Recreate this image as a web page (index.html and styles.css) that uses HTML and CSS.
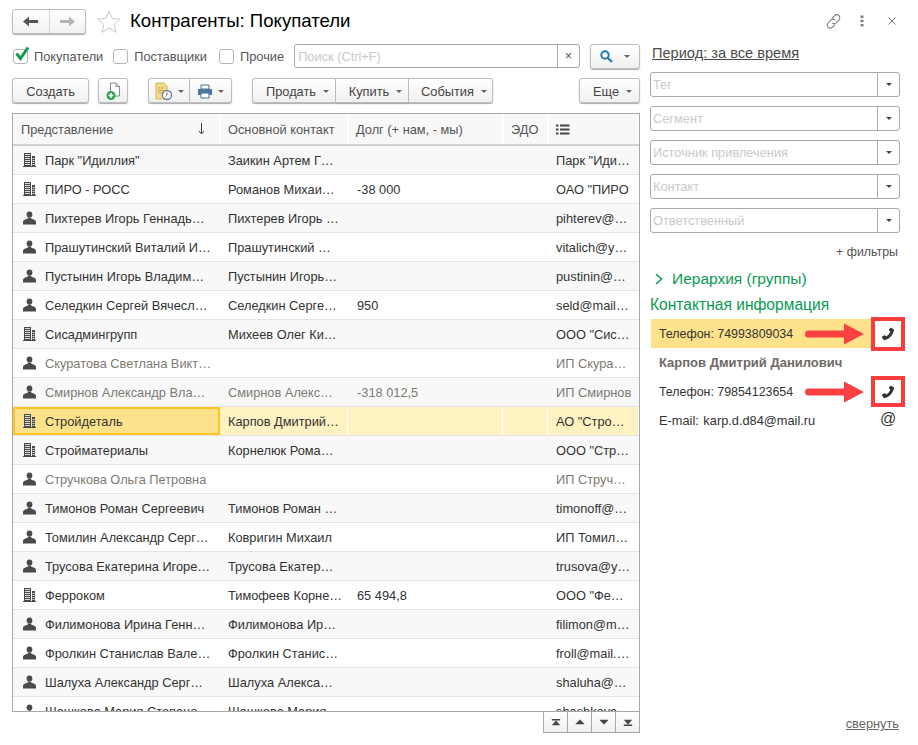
FILE: index.html
```html
<!DOCTYPE html>
<html lang="ru">
<head>
    <meta charset="utf-8" />
    <title>Контрагенты: Покупатели</title>
    <link rel="stylesheet" href="styles.css">
</head>
<body>
    <svg class="defs" width="0" height="0">
        <symbol id="i-org" viewBox="0 0 13 14">
            <path d="M1 0h7v13H1zM9 3h3v10H9z" fill="#4a4a4a" />
            <path d="M2 1.500h5M2 3.500h5M2 5.500h5M2 7.500h5M2 9.500h5M2 11.500h5M9.500 5.500h2M9.500 7.500h2M9.500 9.500h2M9.500 11.500h2" stroke="#fff" stroke-width="1" fill="none" opacity=".8" />
            <path d="M0 13.500h13" stroke="#4a4a4a" stroke-width="1" />
        </symbol>
        <symbol id="i-man" viewBox="0 0 13 13">
            <ellipse cx="6.500" cy="3" rx="2.900" ry="3" fill="#4a4a4a" />
            <path d="M4.800 6h3.400l.3 1.400c2.300.4 4.500 1.100 4.500 3V13H0v-2.600c0-1.900 2.200-2.600 4.500-3z" fill="#4a4a4a" />
        </symbol>
        <symbol id="i-phone" viewBox="0 0 14 14">
            <path d="M10.200 .8l2.600 1.800c.3.200.3.5.2.900-.8 2.900-2.300 5.300-4.300 7.100-1.700 1.500-3.600 2.400-5.300 2.600-.4 0-.6-.1-.8-.4L1 10.500c-.2-.4-.1-.7.200-.9l2.200-1.300c.3-.2.600-.1.800.1l1 1.100c1.900-1 3.400-2.800 4.200-5L8.100 3.400c-.3-.2-.3-.5-.2-.8L9.400 1c.2-.3.500-.4.800-.2z" fill="#333" />
        </symbol>
        <symbol id="i-arrow" viewBox="0 0 59 24">
            <path d="M3.500 8.500H39V1.500L59 12 39 22.500V15.500H3.500a3.500 3.500 0 0 1 0-7z" fill="#f94141" />
        </symbol>
    </svg>

    <div class="page">
        <header class="head">
            <div class="navbtns">
                <span class="navbtn">
                    <svg width="15" height="11" viewBox="0 0 15 11"><path d="M0 5.500L6 .5v3.500h9v3H6v3.500z" fill="#555" /></svg>
                </span>
                <span class="navbtn">
                    <svg width="15" height="11" viewBox="0 0 15 11"><path d="M15 5.500L9 .5v3.500H0v3h9v3.500z" fill="#b5b5b5" /></svg>
                </span>
            </div>
            <svg class="star" width="24" height="23" viewBox="0 0 24 23"><path d="M12 1l3.200 7.400 8 .7-6.100 5.300 1.900 7.900L12 18.100l-7 4.200 1.900-7.900L.8 9.100l8-.7z" fill="#fff" stroke="#c9c9c9" /></svg>
            <h1 class="title">Контрагенты: Покупатели</h1>
            <div class="wintools">
                <svg class="tool-link" width="17" height="17" viewBox="0 0 18 18"><path d="M7.500 5.500l2.500-2.500a3.200 3.200 0 0 1 4.800 4.400l-2.800 2.900a3.200 3.200 0 0 1-4.500.2M10.500 12.500l-2.500 2.500a3.200 3.200 0 0 1-4.800-4.400l2.800-2.900a3.200 3.200 0 0 1 4.500-.2" fill="none" stroke="#777" stroke-width="1.100" /></svg>
                <svg class="tool-dots" width="4" height="12" viewBox="0 0 4 12"><path d="M.5.500h3v2.500h-3zM.5 4.800h3v2.500h-3zM.5 9h3v2.500h-3z" fill="#808080" /></svg>
                <svg class="tool-close" width="8" height="8" viewBox="0 0 8 8"><path d="M.5.500l7 7M7.500.500l-7 7" stroke="#777" stroke-width="1" /></svg>
            </div>
        </header>

        <div class="content">
            <main class="main">
                <div class="filterbar">
                    <label class="check"><span class="box">
                        <svg class="tick" width="16" height="15" viewBox="0 0 16 15"><path d="M2.500 7.500l4 5L14 1.500" fill="none" stroke="#0e9a4e" stroke-width="3" /></svg>
                    </span>Покупатели</label>
                    <label class="check"><span class="box"></span>Поставщики</label>
                    <label class="check"><span class="box"></span>Прочие</label>
                    <div class="search">
                        <span class="search-ph">Поиск (Ctrl+F)</span>
                        <span class="search-x">×</span>
                    </div>
                    <span class="btn searchbtn">
                        <svg width="13" height="13" viewBox="0 0 13 13"><circle cx="5" cy="5" r="3.700" fill="none" stroke="#1f78b4" stroke-width="2" /><path d="M8 8l4 4" stroke="#1f78b4" stroke-width="2.200" /></svg>
                        <i class="caret"></i>
                    </span>
                </div>

                <div class="toolbar">
                    <span class="btn create">Создать</span>
                    <span class="btn docbtn">
                        <svg width="15" height="19" viewBox="0 0 15 19"><path d="M4.500 1H10l3.500 3.500V14h-9z" fill="#fff" stroke="#7f8c8c" /><path d="M10 1v3.500h3.500" fill="#dde" stroke="#7f8c8c" /><circle cx="5" cy="13.500" r="4.500" fill="#2ea44f" /><path d="M2.500 13.500h5M5 11v5" stroke="#fff" stroke-width="1.500" /></svg>
                    </span>
                    <div class="btngroup report">
                        <span class="btn">
                            <svg width="18" height="19" viewBox="0 0 18 19"><path d="M1 1h8l3 3v13H1z" fill="#f3d98a" stroke="#d3b75f" /><path d="M3 6h6M3 8.500h6M3 11h4" stroke="#c4a54a" /><circle cx="12" cy="13" r="4.500" fill="#fff" stroke="#5b7fa8" stroke-width="1.300" /><path d="M12 10.500V13l-1.500 1.500" stroke="#c0392b" fill="none" /></svg>
                            <i class="caret"></i>
                        </span>
                        <span class="btn">
                            <svg width="16" height="15" viewBox="0 0 16 15"><path d="M4 1h8v4H4z" fill="#fff" stroke="#4a6f96" /><path d="M1 5h14v6H1z" fill="#4a76a0" /><path d="M4 9h8v5H4z" fill="#fff" stroke="#4a6f96" /></svg>
                            <i class="caret"></i>
                        </span>
                    </div>
                    <div class="btngroup actions">
                        <span class="btn">Продать<i class="caret"></i></span>
                        <span class="btn">Купить<i class="caret"></i></span>
                        <span class="btn">События<i class="caret"></i></span>
                    </div>
                    <span class="btn more">Еще<i class="caret"></i></span>
                </div>

                <div class="list">
                    <div class="row headrow">
                        <div class="cell sortcell">Представление
                            <svg class="sortarrow" width="7" height="12" viewBox="0 0 7 12"><path d="M3.500 0v10M1 8l2.500 3L6 8" fill="none" stroke="#444" /></svg>
                        </div>
                        <div class="cell">Основной контакт</div>
                        <div class="cell">Долг (+ нам, - мы)</div>
                        <div class="cell">ЭДО</div>
                        <div class="cell">
                            <svg width="14" height="11" viewBox="0 0 14 11"><path d="M0 .5h2.500v2H0zM0 4.500h2.500v2H0zM0 8.500h2.500v2H0zM4 .5h9.500v2H4zM4 4.500h9.500v2H4zM4 8.500h9.500v2H4z" fill="#444" /></svg>
                        </div>
                    </div>
                    <div class="rows">
                        <div class="row"><div class="cell namecell"><svg class="kind"><use href="#i-org" /></svg>Парк "Идиллия"</div><div class="cell">Заикин Артем Г…</div><div class="cell"></div><div class="cell"></div><div class="cell">Парк "Иди…</div></div>
                        <div class="row"><div class="cell namecell"><svg class="kind"><use href="#i-org" /></svg>ПИРО - РОСС</div><div class="cell">Романов Михаи…</div><div class="cell">-38 000</div><div class="cell"></div><div class="cell">ОАО "ПИРО</div></div>
                        <div class="row"><div class="cell namecell"><svg class="kind"><use href="#i-man" /></svg>Пихтерев Игорь Геннадь…</div><div class="cell">Пихтерев Игорь …</div><div class="cell"></div><div class="cell"></div><div class="cell">pihterev@…</div></div>
                        <div class="row"><div class="cell namecell"><svg class="kind"><use href="#i-man" /></svg>Прашутинский Виталий И…</div><div class="cell">Прашутинский …</div><div class="cell"></div><div class="cell"></div><div class="cell">vitalich@y…</div></div>
                        <div class="row"><div class="cell namecell"><svg class="kind"><use href="#i-man" /></svg>Пустынин Игорь Владим…</div><div class="cell">Пустынин Игорь…</div><div class="cell"></div><div class="cell"></div><div class="cell">pustinin@…</div></div>
                        <div class="row"><div class="cell namecell"><svg class="kind"><use href="#i-man" /></svg>Селедкин Сергей Вячесл…</div><div class="cell">Селедкин Серге…</div><div class="cell">950</div><div class="cell"></div><div class="cell">seld@mail…</div></div>
                        <div class="row"><div class="cell namecell"><svg class="kind"><use href="#i-org" /></svg>Сисадмингрупп</div><div class="cell">Михеев Олег Ки…</div><div class="cell"></div><div class="cell"></div><div class="cell">ООО "Сис…</div></div>
                        <div class="row dim"><div class="cell namecell"><svg class="kind"><use href="#i-man" /></svg>Скуратова Светлана Викт…</div><div class="cell"></div><div class="cell"></div><div class="cell"></div><div class="cell">ИП Скура…</div></div>
                        <div class="row dim"><div class="cell namecell"><svg class="kind"><use href="#i-man" /></svg>Смирнов Александр Вла…</div><div class="cell">Смирнов Алекс…</div><div class="cell">-318 012,5</div><div class="cell"></div><div class="cell">ИП Смирнов</div></div>
                        <div class="row selected"><div class="cell namecell"><svg class="kind"><use href="#i-org" /></svg>Стройдеталь</div><div class="cell">Карпов Дмитрий…</div><div class="cell"></div><div class="cell"></div><div class="cell">АО "Стро…</div></div>
                        <div class="row"><div class="cell namecell"><svg class="kind"><use href="#i-org" /></svg>Стройматериалы</div><div class="cell">Корнелюк Рома…</div><div class="cell"></div><div class="cell"></div><div class="cell">ООО "Стр…</div></div>
                        <div class="row dim"><div class="cell namecell"><svg class="kind"><use href="#i-man" /></svg>Стручкова Ольга Петровна</div><div class="cell"></div><div class="cell"></div><div class="cell"></div><div class="cell">ИП Струч…</div></div>
                        <div class="row"><div class="cell namecell"><svg class="kind"><use href="#i-man" /></svg>Тимонов Роман Сергеевич</div><div class="cell">Тимонов Роман …</div><div class="cell"></div><div class="cell"></div><div class="cell">timonoff@…</div></div>
                        <div class="row"><div class="cell namecell"><svg class="kind"><use href="#i-man" /></svg>Томилин Александр Серг…</div><div class="cell">Ковригин Михаил</div><div class="cell"></div><div class="cell"></div><div class="cell">ИП Томил…</div></div>
                        <div class="row"><div class="cell namecell"><svg class="kind"><use href="#i-man" /></svg>Трусова Екатерина Игоре…</div><div class="cell">Трусова Екатер…</div><div class="cell"></div><div class="cell"></div><div class="cell">trusova@y…</div></div>
                        <div class="row"><div class="cell namecell"><svg class="kind"><use href="#i-org" /></svg>Ферроком</div><div class="cell">Тимофеев Корне…</div><div class="cell">65 494,8</div><div class="cell"></div><div class="cell">ООО "Фе…</div></div>
                        <div class="row"><div class="cell namecell"><svg class="kind"><use href="#i-man" /></svg>Филимонова Ирина Генн…</div><div class="cell">Филимонова Ир…</div><div class="cell"></div><div class="cell"></div><div class="cell">filimon@m…</div></div>
                        <div class="row"><div class="cell namecell"><svg class="kind"><use href="#i-man" /></svg>Фролкин Станислав Вале…</div><div class="cell">Фролкин Станис…</div><div class="cell"></div><div class="cell"></div><div class="cell">froll@mail.…</div></div>
                        <div class="row"><div class="cell namecell"><svg class="kind"><use href="#i-man" /></svg>Шалуха Александр Серг…</div><div class="cell">Шалуха Алекса…</div><div class="cell"></div><div class="cell"></div><div class="cell">shaluha@…</div></div>
                        <div class="row"><div class="cell namecell"><svg class="kind"><use href="#i-man" /></svg>Шашкова Мария Степано…</div><div class="cell">Шашкова Мария…</div><div class="cell"></div><div class="cell"></div><div class="cell">shashkova</div></div>
                    </div>
                </div>

                <div class="pager">
                    <span class="pagebtn"><svg width="10" height="7" viewBox="0 0 14 10"><path d="M1 0h12v2H1zM7 2l6 7H1z" fill="#444" /></svg></span>
                    <span class="pagebtn"><svg width="10" height="6" viewBox="0 0 14 8"><path d="M7 .5l6.500 6.500H.5z" fill="#444" /></svg></span>
                    <span class="pagebtn"><svg width="10" height="6" viewBox="0 0 14 8"><path d="M7 7.500L.5 1h13z" fill="#444" /></svg></span>
                    <span class="pagebtn"><svg width="10" height="7" viewBox="0 0 14 10"><path d="M1 1h12L7 8zM1 8h12v2H1z" fill="#444" /></svg></span>
                </div>
            </main>

            <aside class="side">
                <a class="period">Период: за все время</a>
                <div class="fields">
                    <div class="field"><span class="field-ph">Тег</span><span class="field-drop"><i class="caret dark"></i></span></div>
                    <div class="field"><span class="field-ph">Сегмент</span><span class="field-drop"><i class="caret dark"></i></span></div>
                    <div class="field"><span class="field-ph">Источник привлечения</span><span class="field-drop"><i class="caret dark"></i></span></div>
                    <div class="field"><span class="field-ph">Контакт</span><span class="field-drop"><i class="caret dark"></i></span></div>
                    <div class="field"><span class="field-ph">Ответственный</span><span class="field-drop"><i class="caret dark"></i></span></div>
                </div>
                <div class="morefilters">+ фильтры</div>
                <div class="tree">
                    <svg width="8" height="12" viewBox="0 0 8 12"><path d="M1 1l5.500 5L1 11" fill="none" stroke="#0a9a52" stroke-width="1.500" /></svg>
                    Иерархия (группы)
                </div>
                <div class="sidehead">Контактная информация</div>
                <div class="contact hot">
                    Телефон: 74993809034
                    <svg class="redarrow"><use href="#i-arrow" /></svg>
                    <span class="mark"><svg width="14" height="14"><use href="#i-phone" /></svg></span>
                </div>
                <div class="person">Карпов Дмитрий Данилович</div>
                <div class="contact">
                    Телефон: 79854123654
                    <svg class="redarrow"><use href="#i-arrow" /></svg>
                    <span class="mark"><svg width="14" height="14"><use href="#i-phone" /></svg></span>
                </div>
                <div class="contact mail">
                    E-mail: karp.d.d84@mail.ru
                    <span class="at">@</span>
                </div>
                <a class="collapse">свернуть</a>
            </aside>
        </div>
    </div>
</body>
</html>
```

FILE: styles.css
```css
html, body {
    margin: 0;
    height: 100%;
    background: #fff;
}

body {
    font-family: "Liberation Sans", Arial, sans-serif;
    font-size: 12.8px;
    color: #333;
    overflow: hidden;
}

.defs {
    position: absolute;
}

.page {
    height: 745px;
    padding: 8px 0 0 12px;
    box-sizing: border-box;
}

/* header */
.head {
    display: flex;
    align-items: center;
    height: 26px;
}

.navbtns {
    display: flex;
    width: 74px;
    height: 25px;
    box-sizing: border-box;
    border: 1px solid #bdbdbd;
    border-radius: 3px;
    box-shadow: 0 1px 1px #aaa;
    background: linear-gradient(#fff, #f1f1f1);
}

.navbtn {
    flex: 1;
    display: flex;
    align-items: center;
    justify-content: center;
}

.navbtn + .navbtn {
    border-left: 1px solid #d4d4d4;
}

.star {
    margin-left: 11px;
}

.title {
    margin: 0 0 0 9px;
    font-size: 18.6px;
    font-weight: normal;
    color: #000;
}

.wintools {
    display: flex;
    align-items: center;
    margin-left: auto;
    margin-right: 22px;
}

.tool-dots {
    margin-left: 18px;
}

.tool-close {
    margin-left: 24px;
}

.content {
    display: flex;
    margin-top: 10px;
}

.main {
    width: 628px;
    flex: none;
}

/* buttons */
.btn {
    display: inline-flex;
    align-items: center;
    justify-content: center;
    height: 25px;
    box-sizing: border-box;
    border: 1px solid #bdbdbd;
    border-radius: 3px;
    background: linear-gradient(#fff, #f0f0f0);
    box-shadow: 0 1px 1px #aaa;
    color: #444;
}

.caret {
    display: inline-block;
    margin-left: 7px;
    border-left: 3px solid transparent;
    border-right: 3px solid transparent;
    border-top: 3px solid #666;
}

.caret.dark {
    margin-left: 0;
    border-top-color: #444;
}

.filterbar {
    display: flex;
    align-items: center;
    height: 24px;
}

.check {
    display: flex;
    align-items: center;
    margin-right: 10px;
    color: #555;
}

.check:first-child {
    margin-left: 1px;
}

.check:nth-child(2) {
    margin-right: 12px;
}

.box {
    position: relative;
    width: 15px;
    height: 15px;
    margin-right: 6px;
    box-sizing: border-box;
    border: 1px solid #b5b5b5;
    border-radius: 3px;
    background: #fff;
}

.tick {
    position: absolute;
    left: 0;
    top: -4px;
}

.search {
    display: flex;
    align-items: center;
    flex: 1;
    height: 24px;
    box-sizing: border-box;
    border: 1px solid #a9a9a9;
    border-radius: 3px;
}

.search-ph {
    flex: 1;
    padding-left: 3px;
    color: #c8c8c8;
}

.search-x {
    width: 21px;
    line-height: 22px;
    text-align: center;
    border-left: 1px solid #a9a9a9;
    color: #555;
}

.searchbtn {
    width: 50px;
    margin-left: 10px;
    gap: 11px;
}

.searchbtn .caret {
    margin-left: 0;
}

.toolbar {
    display: flex;
    margin-top: 10px;
}

.toolbar .btn {
    padding-top: 2px;
}

.create {
    width: 77px;
}

.docbtn {
    width: 30px;
    margin-left: 9px;
}

.btngroup {
    display: flex;
    border-radius: 3px;
}

.btngroup .btn {
    border-radius: 0;
}

.btngroup .btn + .btn {
    border-left: 0;
}

.btngroup .btn:first-child {
    border-radius: 3px 0 0 3px;
}

.btngroup .btn:last-child {
    border-radius: 0 3px 3px 0;
}

.report {
    margin-left: 20px;
}

.report .btn {
    width: 42px;
}

.report .btn .caret {
    margin-left: 5px;
}

.actions {
    margin-left: 20px;
}

.actions .btn {
    padding-left: 7px;
}

.actions .btn:nth-child(1) {
    width: 84px;
}

.actions .btn:nth-child(2) {
    width: 73px;
}

.actions .btn:nth-child(3) {
    width: 84px;
}

.more {
    width: 61px;
    margin-left: auto;
    padding-left: 6px;
}

/* list */
.list {
    margin-top: 10px;
    height: 599px;
    box-sizing: border-box;
    border: 1px solid #a8a8a8;
    overflow: hidden;
    display: flex;
    flex-direction: column;
}

.row {
    display: grid;
    grid-template-columns: 207px 128px 155px 45px 1fr;
    height: 29px;
    flex: none;
    box-sizing: border-box;
    border-bottom: 1px solid #e3e3e3;
}

.row:nth-child(odd) {
    background: #f8f8f8;
}

.row:nth-child(even) {
    background: #fff;
}

.cell {
    display: flex;
    align-items: center;
    padding: 0 8px;
    box-sizing: border-box;
    white-space: nowrap;
    overflow: hidden;
}

.cell:nth-child(3) {
    padding-left: 9px;
}

.namecell {
    padding-left: 10px;
}

.kind {
    width: 13px;
    height: 14px;
    margin-right: 9px;
    flex: none;
}

.headrow {
    height: 32px;
    background: #f0f0f0;
    border-bottom: 2px solid #d0d0d0;
    color: #555;
}

.headrow .cell {
    padding-left: 7px;
    border-right: 1px solid #fff;
    border-left: 1px solid #fff;
}

.sortcell {
    justify-content: space-between;
}

.sortarrow {
    margin-right: 6px;
}

.dim {
    color: #7e7a72;
}

.row.selected {
    height: 29px;
    background: #fef1c2;
}

.selected .cell {
    border-right: 1px solid #fff;
}

.selected .namecell {
    background: #fde28b;
    border: 2px solid #fcc524;
    padding-left: 8px;
}

.pager {
    display: flex;
    justify-content: flex-end;
}

.pagebtn {
    display: flex;
    align-items: center;
    justify-content: center;
    width: 24px;
    height: 21px;
    box-sizing: border-box;
    border: 1px solid #a8a8a8;
    border-top: 0;
    background: linear-gradient(#fff, #f0f0f0);
}

.pagebtn:first-child {
    width: 25px;
}

.pagebtn + .pagebtn {
    border-left: 0;
}

/* right panel */
.side {
    position: relative;
    width: 250px;
    margin-left: 10px;
    height: 690px;
}

.period {
    display: block;
    margin-left: 2px;
    font-size: 14.6px;
    line-height: 18px;
    color: #4b4b4b;
    text-decoration: underline;
}

.fields {
    display: flex;
    flex-direction: column;
    gap: 9px;
    margin-top: 10px;
}

.field {
    display: flex;
    height: 25px;
    box-sizing: border-box;
    border: 1px solid #a9a9a9;
    border-radius: 3px;
}

.field-ph {
    flex: 1;
    padding-left: 2px;
    line-height: 24px;
    color: #c9c9c9;
}

.field-drop {
    display: flex;
    align-items: center;
    justify-content: center;
    width: 21px;
    border-left: 1px solid #a9a9a9;
}

.morefilters {
    margin: 10px 2px 0 0;
    font-size: 12.4px;
    text-align: right;
    color: #555;
    line-height: 18px;
}

.tree {
    display: flex;
    align-items: center;
    gap: 9px;
    margin: 8px 0 0 5px;
    font-size: 15.5px;
    line-height: 20px;
    color: #0a9a52;
}

.sidehead {
    margin-top: 6px;
    font-size: 15.6px;
    line-height: 20px;
    color: #0a9a52;
}

.contact {
    position: relative;
    display: flex;
    align-items: center;
    height: 29px;
    padding-left: 9px;
    font-size: 12.4px;
}

.contact.mail {
    font-size: 12.8px;
    word-spacing: 1px;
}

.contact.hot {
    margin: 4px 29px 0 1px;
    padding-left: 8px;
    background: #fde28b;
}

.person {
    margin-left: 9px;
    line-height: 29px;
    font-weight: bold;
    font-size: 13px;
    color: #6e6a66;
}

.redarrow {
    position: absolute;
    left: 155px;
    top: 3px;
    width: 59px;
    height: 24px;
}

.hot .redarrow {
    left: 154px;
}

.mark {
    position: absolute;
    left: 221px;
    top: -1px;
    display: flex;
    align-items: center;
    justify-content: center;
    width: 34px;
    height: 31px;
    box-sizing: border-box;
    border: 4px solid #f93d3d;
}

.hot .mark {
    left: 220px;
    top: -2px;
    height: 34px;
}

.at {
    position: absolute;
    left: 230px;
    top: 4px;
    font-size: 16px;
    color: #333;
}

.collapse {
    position: absolute;
    right: 1px;
    top: 672px;
    color: #666;
    text-decoration: underline;
}
```
